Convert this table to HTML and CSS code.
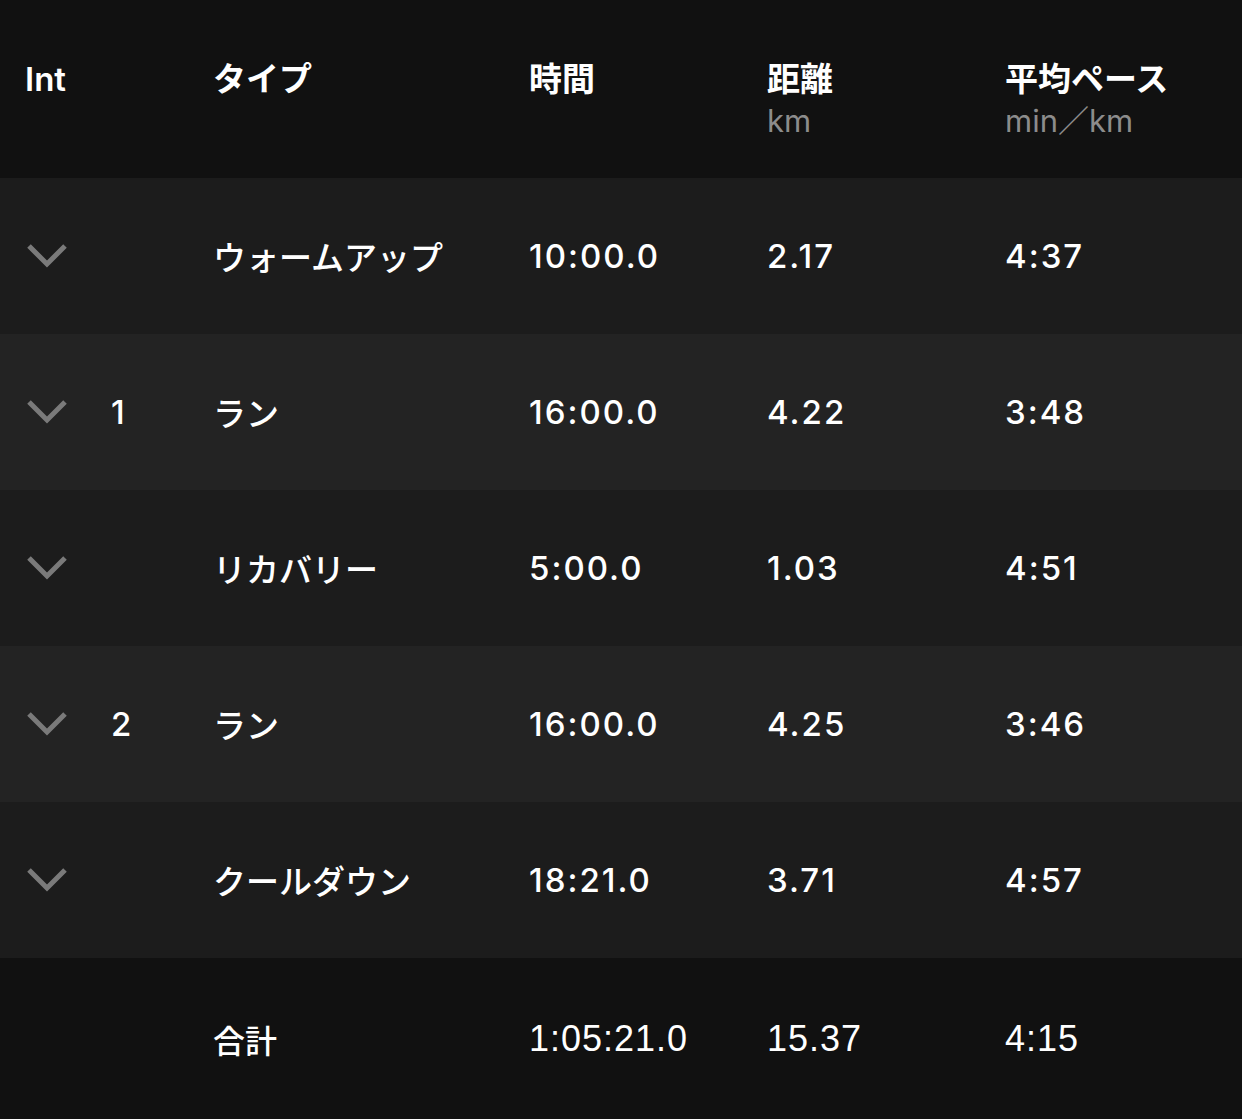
FILE: index.html
```html
<!DOCTYPE html>
<html lang="ja">
<head>
<meta charset="utf-8">
<link rel="stylesheet" href="styles.css">
</head>
<body>
<div class="table">
  <div class="row head">
    <div class="cell c-chev"><div class="h">Int</div></div>
    <div class="cell c-num"></div>
    <div class="cell"><div class="h">タイプ</div></div>
    <div class="cell"><div class="h">時間</div></div>
    <div class="cell"><div class="h">距離</div><div class="sub">km</div></div>
    <div class="cell"><div class="h">平均ペース</div><div class="sub">min／km</div></div>
  </div>

  <div class="row odd">
    <div class="cell c-chev"><svg class="chev" viewBox="0 0 42 26"><path d="M3 3 L21 21 L39 3"/></svg></div>
    <div class="cell c-num"></div>
    <div class="cell jp">ウォームアップ</div>
    <div class="cell num">10:00.0</div>
    <div class="cell num">2.17</div>
    <div class="cell num">4:37</div>
  </div>
  <div class="row even">
    <div class="cell c-chev"><svg class="chev" viewBox="0 0 42 26"><path d="M3 3 L21 21 L39 3"/></svg></div>
    <div class="cell c-num num">1</div>
    <div class="cell jp">ラン</div>
    <div class="cell num">16:00.0</div>
    <div class="cell num">4.22</div>
    <div class="cell num">3:48</div>
  </div>
  <div class="row odd">
    <div class="cell c-chev"><svg class="chev" viewBox="0 0 42 26"><path d="M3 3 L21 21 L39 3"/></svg></div>
    <div class="cell c-num"></div>
    <div class="cell jp">リカバリー</div>
    <div class="cell num">5:00.0</div>
    <div class="cell num">1.03</div>
    <div class="cell num">4:51</div>
  </div>
  <div class="row even">
    <div class="cell c-chev"><svg class="chev" viewBox="0 0 42 26"><path d="M3 3 L21 21 L39 3"/></svg></div>
    <div class="cell c-num num">2</div>
    <div class="cell jp">ラン</div>
    <div class="cell num">16:00.0</div>
    <div class="cell num">4.25</div>
    <div class="cell num">3:46</div>
  </div>
  <div class="row odd">
    <div class="cell c-chev"><svg class="chev" viewBox="0 0 42 26"><path d="M3 3 L21 21 L39 3"/></svg></div>
    <div class="cell c-num"></div>
    <div class="cell jp">クールダウン</div>
    <div class="cell num">18:21.0</div>
    <div class="cell num">3.71</div>
    <div class="cell num">4:57</div>
  </div>

  <div class="row total">
    <div class="cell c-chev"></div>
    <div class="cell c-num"></div>
    <div class="cell jp">合計</div>
    <div class="cell tnum">1:05:21.0</div>
    <div class="cell tnum">15.37</div>
    <div class="cell tnum">4:15</div>
  </div>
</div>
</body>
</html>
```

FILE: styles.css
```css
html, body {
  margin: 0;
  padding: 0;
  background: #111111;
}
body {
  width: 1242px;
  height: 1119px;
  overflow: hidden;
  font-family: Inter, "Noto Sans CJK JP", sans-serif;
  color: #ffffff;
}
.table {
  display: flex;
  flex-direction: column;
}
.row {
  display: grid;
  grid-template-columns: 86px 102px 316px 238px 238px 1fr;
  padding-left: 25px;
  height: 156px;
  align-items: center;
  font-size: 33px;
  font-weight: 500;
}
.num {
  letter-spacing: 2px;
}
.head {
  height: 178px;
  background: #111111;
  align-items: start;
  padding-top: 58px;
  box-sizing: border-box;
}
.head .h {
  font-size: 33px;
  font-weight: 600;
  line-height: 42px;
}
.head .sub {
  font-size: 31px;
  font-weight: 400;
  color: #8c8c8c;
  line-height: 42px;
}
.odd { background: #1c1c1c; }
.even { background: #232323; }
.total {
  height: 161px;
  background: #111111;
  font-weight: 400;
}
.total .jp {
  font-size: 32px;
  font-weight: 500;
}
.tnum {
  font-family: "Liberation Sans", sans-serif;
  font-size: 36px;
  letter-spacing: 1px;
}
.cell {
  white-space: nowrap;
}
.c-chev {
  display: flex;
  align-items: center;
}
.chev {
  width: 44px;
  height: 26px;
  margin-left: 0;
  fill: none;
  stroke: #7a7a7a;
  stroke-width: 5;
  stroke-linecap: butt;
  stroke-linejoin: miter;
}
```
